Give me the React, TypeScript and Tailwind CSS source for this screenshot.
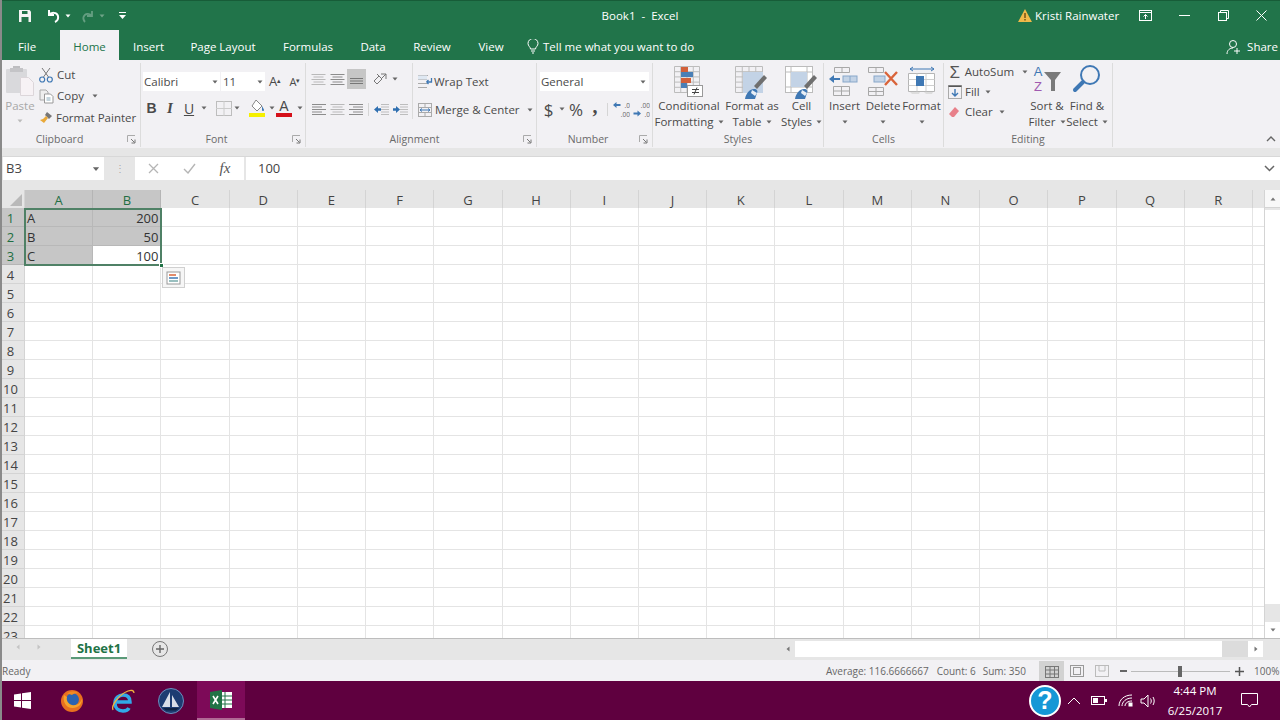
import React from "react";

const font = "font-['Open_Sans','Noto_Sans',sans-serif]";
const COLS = ["A","B","C","D","E","F","G","H","I","J","K","L","M","N","O","P","Q","R",""];

function Caret({ c = "#666", className = "" }: { c?: string; className?: string }) {
  return <svg width="6" height="4" viewBox="0 0 6 4" className={className}><path d="M0.5 0.5h5L3 3.5z" fill={c} /></svg>;
}
function Launcher() {
  return (
    <svg width="9" height="9" viewBox="0 0 9 9"><path d="M0.5 7V0.5H8" fill="none" stroke="#aaa" /><path d="M4 4l3.5 3.5M8 4.5V8H4.5" fill="none" stroke="#777" /></svg>
  );
}
function Lines({ kind, dim = false }: { kind: "l" | "c" | "r"; dim?: boolean }) {
  const rows = [14, 10, 14, 10, 14];
  return (
    <svg width="15" height="13" viewBox="0 0 15 13">
      {rows.map((w, i) => {
        const x = kind === "l" ? 1 : kind === "c" ? (15 - w) / 2 : 15 - w - 1;
        return <rect key={i} x={x} y={1 + i * 2.5} width={w} height="1" fill={dim ? "#b9b9b9" : "#8c8c8c"} />;
      })}
    </svg>
  );
}
function Indent({ dir }: { dir: "l" | "r" }) {
  return (
    <svg width="17" height="13" viewBox="0 0 17 13">
      {[1, 3.5, 6, 8.5, 11].map((y) => <rect key={y} x="8" y={y} width="8" height="1" fill="#bdbdbd" />)}
      <path d={dir === "l" ? "M1 6.5l4-3.5v2.2h3v2.6H5V10z" : "M8 6.5L4 3v2.2H1v2.6h3V10z"} fill="#2f6fb0" />
    </svg>
  );
}
function GridIcon({ w = 30, h = 30, fill = "none" }: { w?: number; h?: number; fill?: string }) {
  return (
    <g stroke="#bcbcbc" strokeWidth="1" fill={fill}>
      {Array.from({ length: 6 }).map((_, i) => <path key={i} d={`M0.5 ${0.5 + (i * (h - 1)) / 5}H${w - 0.5}`} />)}
      {Array.from({ length: 5 }).map((_, i) => <path key={i} d={`M${0.5 + (i * (w - 1)) / 4} 0.5V${h - 0.5}`} />)}
    </g>
  );
}
function Brush() {
  return (
    <g>
      <path d="M19 20l10-11 3 3-10 11z" fill="#6f6f6f" />
      <path d="M10 33c1-6 5-10 9-10 3 0 4 2 3 4l-2 6z" fill="#3f78b4" />
      <path d="M17 24l5 3-2 3-4-3z" fill="#e8eef5" />
    </g>
  );
}
function CondIcon() {
  return (
    <svg width="32" height="32" viewBox="0 0 32 32">
      <g transform="translate(1,0)"><GridIcon w={26} h={27} /></g>
      <rect x="8" y="1" width="7" height="5" fill="#d2603a" />
      <rect x="8" y="6" width="12" height="5" fill="#4a7fb6" />
      <rect x="8" y="12" width="10" height="5" fill="#d2603a" />
      <rect x="8" y="17" width="6" height="5" fill="#4a7fb6" />
      <rect x="14.5" y="19.5" width="15" height="11" fill="#fff" stroke="#999" />
      <path d="M19 23.500h7M19 26.500h7M24 21.500l-3 7" stroke="#444" fill="none" />
    </svg>
  );
}
function TableIcon() {
  return (
    <svg width="34" height="34" viewBox="0 0 34 34">
      <GridIcon w={28} h={27} />
      <rect x="8" y="6" width="20" height="21" fill="#c3d3e6" />
      <Brush />
    </svg>
  );
}
function StyleIcon() {
  return (
    <svg width="34" height="34" viewBox="0 0 34 34">
      <rect x="0.5" y="0.5" width="27" height="26" fill="#fff" stroke="#bcbcbc" />
      <path d="M6 .5v26M.5 6h27M22 .5v26M.5 21h27" stroke="#bcbcbc" />
      <rect x="6" y="6" width="16" height="15" fill="#c3d3e6" />
      <Brush />
    </svg>
  );
}
function InsertIcon() {
  return (
    <svg width="32" height="30" viewBox="0 0 32 30">
      <path d="M5.5 1.5h15v5h-15zM13 1.5v5M4.5 20.5h16v9h-16zM12.5 20.5v9M4.5 25h16" fill="none" stroke="#a8a8a8" />
      <rect x="14" y="10" width="14" height="6" fill="#c3d3e6" stroke="#88a7c9" />
      <path d="M21 10v6" stroke="#88a7c9" />
      <path d="M0 13l5-4v3h6v2H5v3z" fill="#3f78b4" />
    </svg>
  );
}
function DeleteIcon() {
  return (
    <svg width="32" height="30" viewBox="0 0 32 30">
      <path d="M1.5 1.5h15v5h-15zM9 1.5v5M1.5 21.5h15v8h-15zM9 21.5v8M1.5 25.5h15" fill="none" stroke="#a8a8a8" />
      <rect x="7" y="10" width="11" height="6" fill="#c3d3e6" stroke="#88a7c9" />
      <path d="M18 6l12 13M30 6L18 19" stroke="#d9643a" strokeWidth="2.4" />
    </svg>
  );
}
function FormatIcon() {
  return (
    <svg width="28" height="30" viewBox="0 0 28 30">
      <path d="M2 3h24M2 3l3-2M2 3l3 2M26 3l-3-2M26 3l-3 2" stroke="#3f78b4" fill="none" />
      <path d="M0.5 7.5h26v18h-26z" fill="#fff" stroke="#b5b5b5" />
      <path d="M9 7.5v18M18 7.5v18M.5 13.5h26M.5 19.5h26" stroke="#cfcfcf" />
      <rect x="8" y="10" width="8" height="10" fill="#3f78b4" />
      <path d="M2 26h10l-1 2H4zM16 26h9l-1 2h-6z" fill="#ddd" />
    </svg>
  );
}

function BigBtn({ w, icon, l1, l2, h = 32 }: { w: number; icon: React.ReactNode; l1: string; l2?: string; h?: number }) {
  return (
    <div className="flex shrink-0 flex-col items-center" style={{ width: w }}>
      <div className="flex items-start justify-center" style={{ height: h }}>{icon}</div>
      <div className="h-4 whitespace-nowrap text-[11.5px] leading-4">{l1}</div>
      <div className="flex h-4 items-center gap-1 whitespace-nowrap text-[11.5px] leading-4">
        {l2 ? <span>{l2}</span> : null}
        <Caret />
      </div>
    </div>
  );
}
function Group({ w, label, launcher, children, shift }: { w: number; label: string; launcher?: boolean; children: React.ReactNode; shift?: number }) {
  return (
    <div className="flex h-[84px] shrink-0 flex-col border-r border-[#dcdcdc]" style={{ width: w }}>
      <div className="flex h-[69px] items-start overflow-visible">{children}</div>
      <div className="flex h-[15px] items-center">
        <div className="flex-1 text-center text-[10.5px] leading-[15px] text-[#6a6a6a]" style={shift ? { paddingRight: shift } : undefined}>{label}</div>
        {launcher ? <div className="mr-[4px] flex"><Launcher /></div> : null}
      </div>
    </div>
  );
}
function Cell({ w, children, className = "" }: { w: number; children?: React.ReactNode; className?: string }) {
  return <div className={`flex shrink-0 items-center justify-center ${className}`} style={{ width: w }}>{children}</div>;
}

function Ribbon() {
  return (
    <div className="flex h-[88px] bg-[#f2f1f4] pt-[3px] text-[#4a4a4a]">
      <Group w={139} label="Clipboard" launcher shift={10}>
        <div className="flex w-[36px] flex-col items-center pt-[2px]">
          <svg width="30" height="31" viewBox="0 0 30 31" className="shrink-0">
            <rect x="1" y="4" width="21" height="24" rx="1" fill="#d9d9dc" />
            <rect x="8" y="1" width="7" height="3" fill="#bdbdc0" /><rect x="5" y="3" width="13" height="4" fill="#c4c4c7" />
            <path d="M15.5 12.5h8l5 5v13h-13z" fill="#f7f2f5" stroke="#dcd6da" />
          </svg>
          <div className="mt-[2px] text-[11.5px] leading-4 text-[#a8a8a8]">Paste</div>
          <Caret c="#bbb" className="mt-[5px]" />
        </div>
        <div className="ml-[1px] flex flex-col text-[11.5px] leading-4">
          <div className="flex h-[22px] items-center gap-[3px] pt-[2px]">
            <svg width="14" height="16" viewBox="0 0 14 16" fill="none"><path d="M3 1l6.5 9M11 1L4.500 10" stroke="#777" /><circle cx="3.200" cy="12.500" r="2.500" stroke="#3f78b4" strokeWidth="1.200" /><circle cx="10.800" cy="12.500" r="2.500" stroke="#3f78b4" strokeWidth="1.200" /></svg>
            <span className="ml-[1px]">Cut</span>
          </div>
          <div className="flex h-[22px] items-center gap-[3px]">
            <svg width="15" height="15" viewBox="0 0 15 15" fill="none"><path d="M1 1h6l2 2v8H1z" fill="#eee" stroke="#aaa" /><path d="M5.500 5h6l2.500 2.500V14H5.500z" fill="#fff" stroke="#999" /><path d="M7.500 9h4M7.500 11h4" stroke="#8ab" /></svg>
            <span>Copy</span><Caret className="ml-[5px]" />
          </div>
          <div className="flex h-[21px] items-center gap-[3px]">
            <svg width="14" height="14" viewBox="0 0 14 14"><path d="M8 1l5 4-3 3-4-4z" fill="#777" /><path d="M7 5l2 2-4 5-4-3 3-1z" fill="#e9a93a" /></svg>
            <span className="whitespace-nowrap">Format Painter</span>
          </div>
        </div>
      </Group>
      <Group w={165} label="Font" launcher>
        <div className="flex flex-col pl-[2px] pt-[9px]">
          <div className="flex h-[19px] items-center">
            <div className="flex h-[19px] w-[77px] items-center justify-between bg-white pl-[1px] pr-[2px] text-[11.5px]"><span>Calibri</span><Caret /></div>
            <div className="ml-px flex h-[19px] w-[44px] items-center justify-between bg-white pl-[2px] pr-[2px] text-[11.5px]"><span>11</span><Caret /></div>
            <div className="ml-[1px] w-[18px] text-center text-[13px] leading-none">A<sup className="text-[7px]">▴</sup></div>
            <div className="ml-[2px] w-[18px] text-center text-[11px] leading-none">A<sup className="text-[7px]">▾</sup></div>
          </div>
          <div className="mt-[7px] flex h-[20px] items-center">
            <Cell w={15} className="ml-[1px] font-['Liberation_Sans'] text-[14px] font-bold">B</Cell>
            <Cell w={22} className="font-['Liberation_Serif'] text-[15px] font-bold italic">I</Cell>
            <Cell w={16} className="text-[14px] underline">U</Cell>
            <Cell w={14}><Caret /></Cell>
            <Cell w={18} className="ml-[4px]"><svg width="16" height="15" viewBox="0 0 16 15" fill="none"><rect x="0.500" y="0.500" width="15" height="14" stroke="#bdbdbd" /><path d="M8 0v15M0 7.500h16" stroke="#ccc" /></svg></Cell>
            <Cell w={10} className="ml-[-1px]"><Caret /></Cell>
            <Cell w={30}><svg width="18" height="18" viewBox="0 0 18 18"><path d="M8 1l6 6-5 5-5-5z" fill="#fff" stroke="#888" /><path d="M14 7c1 2 2 3 2 4s-1 1-1 1-1 0-1-1z" fill="#3f78b4" /><rect x="1" y="14" width="16" height="4" fill="#f5f000" /></svg></Cell>
            <Cell w={6} className="ml-[-3px]"><Caret /></Cell>
            <Cell w={24} className="ml-[-3px]">
              <div className="flex flex-col items-center"><span className="font-['Liberation_Sans'] text-[14px] leading-[14px]">A</span><span className="h-[4px] w-[16px] bg-[#d5101a]" /></div>
            </Cell>
            <Cell w={6} className="ml-[1px]"><Caret /></Cell>
          </div>
        </div>
      </Group>
      <Group w={231} label="Alignment" launcher>
        <div className="flex w-[106px] flex-col pl-[3px] pt-[6px]">
          <div className="flex h-[20px] items-center">
            <Cell w={19}><Lines kind="c" dim /></Cell>
            <Cell w={19}><Lines kind="c" /></Cell>
            <Cell w={19} className="h-[20px] bg-[#c6c6c6]"><svg width="15" height="13" viewBox="0 0 15 13">{[5, 7.500, 10].map((y) => <rect key={y} x="1" y={y} width="13" height="1" fill="#777" />)}</svg></Cell>
            <Cell w={20} className="ml-[5px]"><svg width="18" height="16" viewBox="0 0 18 16" fill="none" stroke="#777"><path d="M2 10l5-5 3 3-5 5zM5 3l3 3M9 3h5M14 3v5M14 3L9 8" /></svg></Cell>
            <Caret className="ml-[1px]" />
          </div>
          <div className="mt-[12px] flex h-[16px] items-center">
            <Cell w={19}><Lines kind="l" /></Cell>
            <Cell w={19}><Lines kind="c" dim /></Cell>
            <Cell w={19}><Lines kind="r" /></Cell>
            <div className="mx-[2px] h-[13px] w-px bg-[#d5d5d5]" />
            <Cell w={19} className="ml-[1px]"><Indent dir="l" /></Cell>
            <Cell w={19}><Indent dir="r" /></Cell>
          </div>
        </div>
        <div className="h-[56px] w-px self-start bg-[#dcdcdc]" />
        <div className="flex flex-col whitespace-nowrap pl-[4px] pt-[9px] text-[11.5px] leading-4">
          <div className="flex h-[20px] items-center gap-[1px]">
            <svg width="16" height="16" viewBox="0 0 16 16" fill="none"><path d="M1 1.500h10M1 5.500h9M1 9.500h9M1 13.500h9" stroke="#aaa" /><rect x="1" y="1.500" width="9" height="4" fill="#dfe8f2" /><path d="M14.500 4v4h-5M9.500 8l2-2M9.500 8l2 2" stroke="#3f78b4" strokeWidth="1.300" /></svg>
            <span>Wrap Text</span>
          </div>
          <div className="mt-[8px] flex h-[20px] items-center gap-[2px]">
            <svg width="16" height="16" viewBox="0 0 16 16" fill="none"><rect x="1.500" y="1.500" width="13" height="13" stroke="#aaa" /><path d="M1.500 5.500h13M1.500 10.500h13M8 1.500v4M8 10.500v4" stroke="#aaa" /><path d="M3 8h10M3 8l2-1.500M3 8l2 1.500M13 8l-2-1.500M13 8l-2 1.500" stroke="#3f78b4" /></svg>
            <span>Merge &amp; Center</span><Caret className="ml-[5px]" />
          </div>
        </div>
      </Group>
      <Group w={116} label="Number" launcher>
        <div className="flex flex-col pl-[3px] pt-[9px]">
          <div className="flex h-[19px] w-[109px] items-center justify-between bg-white pl-[1px] pr-[3px] text-[11.5px]"><span>General</span><Caret /></div>
          <div className="mt-[7px] flex h-[22px] items-center">
            <Cell w={17} className="text-[17px] leading-none">$</Cell>
            <Cell w={10}><Caret /></Cell>
            <Cell w={18} className="text-[17px] leading-none">%</Cell>
            <Cell w={20} className="mb-[7px] font-['Liberation_Serif'] text-[20px] font-bold leading-none">,</Cell>
            <div className="mx-[2px] h-[13px] w-px bg-[#d5d5d5]" />
            <Cell w={20} className="ml-[1px]"><svg width="18" height="18" viewBox="0 0 18 18"><text x="18" y="7.500" textAnchor="end" fontSize="6.500" fill="#666" fontFamily="'Open Sans'">.0</text><text x="18" y="16.500" textAnchor="end" fontSize="6.500" fill="#666" fontFamily="'Open Sans'">.00</text><path d="M1 5l3.500-3v2h4v2h-4v2z" fill="#3f78b4" /></svg></Cell>
            <Cell w={19}><svg width="18" height="18" viewBox="0 0 18 18"><text x="18" y="7.500" textAnchor="end" fontSize="6.500" fill="#666" fontFamily="'Open Sans'">.00</text><text x="18" y="16.500" textAnchor="end" fontSize="6.500" fill="#666" fontFamily="'Open Sans'">.0</text><path d="M9 13.500l-3.500-3v2h-4v2h4v2z" fill="#3f78b4" /></svg></Cell>
          </div>
        </div>
      </Group>
      <Group w={171} label="Styles">
        <div className="flex pt-[3px]">
          <BigBtn w={72} icon={<CondIcon />} l1="Conditional" l2="Formatting" />
          <BigBtn w={54} icon={<TableIcon />} l1="Format as" l2="Table" />
          <BigBtn w={45} icon={<StyleIcon />} l1="Cell" l2="Styles" />
        </div>
      </Group>
      <Group w={120} label="Cells">
        <div className="flex pl-[1px] pt-[3px]">
          <BigBtn w={39} icon={<InsertIcon />} l1="Insert" />
          <BigBtn w={38} icon={<DeleteIcon />} l1="Delete" />
          <BigBtn w={39} icon={<FormatIcon />} l1="Format" />
        </div>
      </Group>
      <Group w={169} label="Editing">
        <div className="mt-[-1px] flex w-[84px] flex-col pl-[4px] text-[11.5px]">
          <div className="flex h-[20px] items-center gap-[3px]">
            <span className="w-[14px] text-center font-['Liberation_Sans'] text-[17px] leading-none text-[#555]">Σ</span><span>AutoSum</span><Caret className="ml-[5px]" />
          </div>
          <div className="flex h-[20px] items-center gap-[3px]">
            <svg width="14" height="14" viewBox="0 0 14 14" fill="none"><rect x="0.500" y="0.500" width="13" height="13" stroke="#aaa" /><path d="M0.500 0.500h13v1.500h-13z" fill="#555" /><path d="M7 4v7M4 8l3 3 3-3" stroke="#3f78b4" strokeWidth="1.400" /></svg>
            <span>Fill</span><Caret className="ml-[2px]" />
          </div>
          <div className="flex h-[20px] items-center gap-[5px]">
            <svg width="12" height="12" viewBox="0 0 12 12"><path d="M7 1l4 4-5 6H4L1 8z" fill="#e8808a" /></svg>
            <span>Clear</span><Caret className="ml-[1px]" />
          </div>
        </div>
        <div className="flex pt-[1px]">
          <BigBtn w={38} h={34} icon={
            <svg width="30" height="32" viewBox="0 0 30 32">
              <text x="6" y="12" textAnchor="middle" fontSize="13" fill="#3f78b4" fontFamily="'Liberation Sans'">A</text>
              <text x="6" y="27" textAnchor="middle" fontSize="13" fill="#a05ab0" fontFamily="'Liberation Sans'">Z</text>
              <path d="M12 8h17l-6 8v11h-4V16z" fill="#7a7a7a" />
            </svg>} l1="Sort &amp;" l2="Filter" />
          <BigBtn w={42} h={34} icon={
            <svg width="30" height="30" viewBox="0 0 30 30" fill="none">
              <circle cx="18" cy="11" r="9" stroke="#3f78b4" strokeWidth="2" />
              <path d="M11 18L3 26" stroke="#3f78b4" strokeWidth="4" strokeLinecap="round" />
            </svg>} l1="Find &amp;" l2="Select" />
        </div>
      </Group>
      <div className="flex flex-1 items-end justify-end pb-[6px] pr-[4px]">
        <svg width="10" height="6" viewBox="0 0 10 6" fill="none"><path d="M1 5l4-4 4 4" stroke="#666" strokeWidth="1.400" /></svg>
      </div>
    </div>
  );
}

const VALUES: Record<string, string> = { A1: "A", A2: "B", A3: "C", B1: "200", B2: "50", B3: "100" };

function Sheet() {
  const rows = Array.from({ length: 23 }, (_, i) => i + 1);
  return (
    <div className="relative flex h-[448px] bg-white">
      <div className="flex-1 overflow-hidden">
        <div className="flex h-[18px] bg-[#e6e6e6] text-[13px] leading-[20px]">
          <div className="flex w-[23px] shrink-0 items-end justify-end border-r border-[#d4d4d4] pb-[2px] pr-[2px]">
            <svg width="12" height="12" viewBox="0 0 12 12"><path d="M12 0v12H0z" fill="#b9b9b9" /></svg>
          </div>
          {COLS.map((c, i) => (
            <div key={i} className={`w-[68.22px] shrink-0 border-r text-center ${i < 2 ? "border-[#b5b5b5] bg-[#c6c6c6] text-[#1f6e43]" : "border-[#d4d4d4] text-[#444]"}`}>{c}</div>
          ))}
        </div>
        {rows.map((r) => (
          <div key={r} className="flex h-[19px] text-[13px] leading-[21px]">
            <div className={`w-[23px] shrink-0 border-b border-r pr-[5px] text-center ${r <= 3 ? "border-[#b5b5b5] bg-[#c6c6c6] text-[#1f6e43]" : "border-[#d4d4d4] bg-[#e6e6e6] text-[#444]"}`}>{r}</div>
            {COLS.map((c, i) => {
              const t = VALUES[c + r];
              const sel = r <= 3 && i < 2 && !(r === 3 && i === 1);
              return (
                <div key={i} className={`w-[68.22px] shrink-0 border-b border-r pl-[2px] pr-[2px] text-[#333] ${i === 1 ? "text-right" : "text-left"} ${sel ? "border-[#b8b8b8] bg-[#c6c6c6]" : "border-[#e4e4e4]"}`}>{t}</div>
              );
            })}
          </div>
        ))}
      </div>
      {/* selection overlay */}
      <div className="absolute left-[22px] top-[18px] h-[58px] w-[138px] border-2 border-[#4f8166]" />
      <div className="absolute left-[157px] top-[73px] h-[5px] w-[5px] border border-white bg-[#217346]" />
      <div className="absolute left-[160px] top-[77px] flex h-[21px] w-[23px] items-center justify-center border border-[#d0d0d0] bg-[#f6f6f6]">
        <svg width="15" height="14" viewBox="0 0 15 14"><rect x="1" y="1" width="13" height="12" fill="#fff" stroke="#999" /><path d="M3 4h7" stroke="#d9643a" strokeWidth="1.500" /><path d="M3 7h9" stroke="#3f78b4" strokeWidth="1.500" /><path d="M3 10h9" stroke="#7aa" strokeWidth="1.500" /></svg>
      </div>
      {/* vertical scrollbar */}
      <div className="flex w-[16px] shrink-0 flex-col border-l border-[#d4d4d4] bg-[#e6e6e6]">
        <div className="flex h-[18px] items-center justify-center border-b border-[#d4d4d4] bg-[#f8f8f8]"><Caret c="#777" className="rotate-180" /></div>
        <div className="flex-1 pt-[2px]"><div className="h-[394px] w-full bg-white" /></div>
        <div className="flex h-[16px] items-center justify-center bg-white"><Caret c="#777" /></div>
      </div>
    </div>
  );
}

export default function App() {
  return (
    <div className={`${font} flex h-[720px] w-[1280px] flex-col overflow-hidden border-l-2 border-l-[#8a8a8a] bg-white`}>
      <div className="ml-[-2px] h-[60px] shrink-0 border-t border-t-[#175c38] bg-[#21744a] text-white">
        <div className="flex h-[29px] items-center">
          <div className="flex w-[262px] items-center">
            <svg width="16" height="16" viewBox="0 0 16 16" className="ml-[17px]"><path d="M2 2h10.500L14 3.500V14H2z" fill="#f4f4f4" /><rect x="5" y="3" width="5.500" height="3" fill="#21744a" /><rect x="4.500" y="9" width="7" height="5" fill="#21744a" /></svg>
            <svg width="18" height="16" viewBox="0 0 18 16" fill="none" className="ml-[11px]"><path d="M5 2v5h5M5 7c2-3 8-3 9 1 .6 3-1 5-3 6" stroke="#fff" strokeWidth="2" /></svg>
            <Caret c="#fff" className="ml-[3px]" />
            <svg width="16" height="14" viewBox="0 0 16 14" fill="none" className="ml-[9px] opacity-30"><path d="M12 2v5H7M12 7C10 4 5 4 3.500 8 3 10 4 12 5 13" stroke="#fff" strokeWidth="1.800" /></svg>
            <Caret c="#6fa387" className="ml-[3px]" />
            <svg width="7" height="7" viewBox="0 0 7 7" className="ml-[14px]"><path d="M0 0h7v1H0zM0 3h7L3.500 7z" fill="#fff" /></svg>
          </div>
          <div className="flex-1 whitespace-pre pt-[1px] text-center text-[11.5px]">Book1  -  Excel</div>
          <div className="flex w-[262px] items-center">
            <svg width="14" height="13" viewBox="0 0 14 13"><path d="M7 0l7 13H0z" fill="#f0b94a" /><rect x="6.300" y="4" width="1.400" height="5" fill="#6b4a10" /><rect x="6.300" y="10" width="1.400" height="1.500" fill="#6b4a10" /></svg>
            <span className="ml-[3px] w-[84px] whitespace-nowrap text-[11.5px]">Kristi Rainwater</span>
            <svg width="13" height="11" viewBox="0 0 13 11" fill="none" className="ml-[20px]"><rect x="0.500" y="0.500" width="12" height="10" stroke="#fff" /><path d="M0 2.500h13" stroke="#fff" /><path d="M6.500 9V4.500M4.500 6.500l2-2 2 2" stroke="#fff" /></svg>
            <div className="ml-[27px] h-px w-[11px] bg-white" />
            <svg width="11" height="11" viewBox="0 0 11 11" fill="none" className="ml-[28px]"><rect x="0.500" y="2.500" width="8" height="8" stroke="#fff" /><path d="M2.500 2.500v-2h8v8h-2" stroke="#fff" /></svg>
            <svg width="11" height="11" viewBox="0 0 11 11" fill="none" className="ml-[27px]"><path d="M0.500 0.500l10 10M10.500 0.500l-10 10" stroke="#fff" /></svg>
          </div>
        </div>
        <div className="flex h-[30px] items-end text-[11.5px] leading-4">
          <div className="flex h-[30px] w-[60px] items-center justify-center pr-[6px] pt-[4px]">File</div>
          <div className="flex h-[30px] w-[59px] items-center justify-center bg-[#f2f1f4] pt-[4px] text-[#21744a]">Home</div>
          <div className="flex h-[30px] w-[59px] items-center justify-center pt-[4px]">Insert</div>
          <div className="flex h-[30px] w-[90px] items-center justify-center pt-[4px]">Page Layout</div>
          <div className="flex h-[30px] w-[80px] items-center justify-center pt-[4px]">Formulas</div>
          <div className="flex h-[30px] w-[50px] items-center justify-center pt-[4px]">Data</div>
          <div className="flex h-[30px] w-[68px] items-center justify-center pt-[4px]">Review</div>
          <div className="flex h-[30px] w-[50px] items-center justify-center pt-[4px]">View</div>
          <div className="flex h-[30px] flex-1 items-center gap-[4px] pl-[11px] pt-[3px]">
            <svg width="12" height="15" viewBox="0 0 12 15" fill="none"><path d="M3.500 10c0-2-2.500-3-2.500-5.500a5 5 0 0 1 10 0C11 7 8.500 8 8.500 10zM4 12h4M5 14h2" stroke="#fff" /></svg>
            <span>Tell me what you want to do</span>
          </div>
          <div className="flex h-[30px] items-center pr-[2px] pt-[4px]">
            <svg width="16" height="16" viewBox="0 0 16 16" fill="none"><circle cx="7" cy="5" r="3.500" stroke="#fff" /><path d="M1 15c0-4 3-6 6-6M11 9v6M8 12h6" stroke="#fff" /></svg>
            <span className="ml-[5px]">Share</span>
          </div>
        </div>
      </div>
      <Ribbon />
      <div className="h-[9px] shrink-0 border-b border-[#d8d8d8] bg-[#e6e6e6]" />
      <div className="flex h-[33px] shrink-0 items-start bg-[#e6e6e6] pl-[1px]">
        <div className="flex h-[23px] w-[101px] items-center justify-between bg-white pl-[3px] pr-[5px] text-[13px] text-[#444]"><span>B3</span><Caret c="#666" className="scale-125" /></div>
        <div className="flex h-[23px] w-[31px] items-center justify-center text-[10px] text-[#aaa]">⋮</div>
        <div className="flex h-[23px] w-[109px] items-center bg-white">
          <Cell w={36}><svg width="11" height="11" viewBox="0 0 11 11" fill="none"><path d="M1 1l9 9M10 1l-9 9" stroke="#b5b5b5" strokeWidth="1.300" /></svg></Cell>
          <Cell w={36}><svg width="13" height="11" viewBox="0 0 13 11" fill="none"><path d="M1 6l4 4 7-9" stroke="#b5b5b5" strokeWidth="1.400" /></svg></Cell>
          <Cell w={36} className="font-['Liberation_Serif'] text-[15px] italic text-[#555]">fx</Cell>
        </div>
        <div className="ml-[2px] flex h-[23px] flex-1 items-center justify-between bg-white pl-[12px] pr-[5px] text-[13px] text-[#444]">
          <span>100</span>
          <svg width="11" height="7" viewBox="0 0 11 7" fill="none"><path d="M1 1l4.500 4.500L10 1" stroke="#666" strokeWidth="1.500" /></svg>
        </div>
      </div>
      <Sheet />
      {/* tab bar */}
      <div className="flex h-[22px] shrink-0 items-start border-t border-[#bdbdbd] bg-[#e6e6e6]">
        <div className="flex w-[69px] items-center gap-[15px] pl-[13px] pt-[6px]">
          <Caret c="#c4c4c4" className="rotate-90" /><Caret c="#c4c4c4" className="-rotate-90" />
        </div>
        <div className="h-[20px] w-[56px] border-b-2 border-b-[#5a9a78] bg-white text-center text-[13px] font-bold leading-[18px] text-[#217346]">Sheet1</div>
        <div className="ml-[25px] mt-[2px] flex h-[16px] w-[16px] items-center justify-center rounded-full border border-[#777] text-[#666]">
          <svg width="10" height="10" viewBox="0 0 10 10"><path d="M5 1v8M1 5h8" stroke="#666" strokeWidth="1.400" /></svg>
        </div>
        <div className="flex-1" />
        <div className="flex items-center pr-[17px] pt-[2px]">
          <Cell w={15} className="h-[16px]"><Caret c="#777" className="rotate-90" /></Cell>
          <div className="h-[16px] w-[427px] bg-white" />
          <div className="h-[16px] w-[26px] bg-[#dcdcdc]" />
          <Cell w={15} className="h-[16px] bg-white"><Caret c="#777" className="-rotate-90" /></Cell>
        </div>
      </div>
      {/* status */}
      <div className="flex h-[21px] shrink-0 items-center bg-[#f2f1f4] pt-[1px] text-[10px] text-[#666]">
        <span>Ready</span>
        <div className="flex-1" />
        <span>Average: 116.6666667</span>
        <span className="ml-[8px]">Count: 6</span>
        <span className="ml-[7px]">Sum: 350</span>
        <div className="mb-[-1px] ml-[13px] flex h-[21px] w-[25px] items-center justify-center self-start bg-[#d2d2d2]">
          <svg width="14" height="12" viewBox="0 0 14 12" fill="none" stroke="#777"><rect x="0.500" y="0.500" width="13" height="11" /><path d="M5 0v12M9.500 0v12M0 4h14M0 8h14" /></svg>
        </div>
        <svg width="14" height="12" viewBox="0 0 14 12" fill="none" stroke="#999" className="ml-[6px]"><rect x="0.500" y="0.500" width="13" height="11" /><rect x="3.500" y="2.500" width="7" height="7" /></svg>
        <svg width="14" height="12" viewBox="0 0 14 12" fill="none" stroke="#bbb" className="ml-[11px]"><rect x="0.500" y="0.500" width="13" height="11" /><path d="M4 0v6h6V0" /></svg>
        <div className="ml-[11px] h-[2px] w-[7px] bg-[#666]" />
        <div className="relative ml-[4px] h-px w-[99px] bg-[#bbb]">
          <div className="absolute left-[47px] top-[-5px] h-[11px] w-[4px] bg-[#666]" />
        </div>
        <svg width="9" height="9" viewBox="0 0 9 9" className="ml-[5px]"><path d="M4.500 0v9M0 4.500h9" stroke="#555" strokeWidth="1.500" /></svg>
        <span className="ml-[10px] w-[26px] whitespace-nowrap">100%</span>
      </div>
      {/* taskbar */}
      <div className="ml-[-2px] flex h-[39px] shrink-0 items-center bg-[#5f003f] text-white">
        <svg width="17" height="17" viewBox="0 0 17 17" className="ml-[14px]"><path d="M0 2.500l7-1v6.500H0zM8 1.300L17 0v8H8zM0 9h7v6.500l-7-1zM8 9h9v8l-9-1.300z" fill="#fff" /></svg>
        <svg width="24" height="24" viewBox="0 0 24 24" className="ml-[29px]"><circle cx="12" cy="12" r="11" fill="#e8701f" /><circle cx="12.500" cy="10.500" r="6.500" fill="#2b63b0" /><path d="M4 6c-1 4 0 9 4 12 4 2 9 1 12-2 1.500-2 2-4 2-6-2 5-6 7-10 6-4-1-6-5-5-8z" fill="#f6a32c" /><path d="M7 5c3-3 8-3 11-1-3 0-5 1-6 2-2-1-3-1-5-1z" fill="#f08a24" /></svg>
        <svg width="26" height="26" viewBox="0 0 26 26" fill="none" className="ml-[26px]"><path d="M6 14h14c0-5-3-7-7-7s-8 3-8 8 3 8 8 8c3 0 5-1 6-3" stroke="#31a9e8" strokeWidth="3.500" /><path d="M3 22C1 18 8 7 18 3c3-1 6-1 6 2" stroke="#f2b43c" strokeWidth="1.300" /></svg>
        <svg width="26" height="26" viewBox="0 0 26 26" className="ml-[22px]"><circle cx="13" cy="13" r="12.500" fill="#1d3c72" /><circle cx="13" cy="13" r="12.500" fill="none" stroke="#6d8fbf" /><path d="M12 4v15H4zM14 7l7 12h-7z" fill="#d8dde8" /><path d="M5 20h16l-3 2.500H8z" fill="#0e2244" /></svg>
        <div className="ml-[13px] flex h-[39px] w-[48px] items-center justify-center border-b-2 border-b-[#b06a95] bg-[#7d0a58]">
          <svg width="22" height="20" viewBox="0 0 22 20"><rect x="9" y="2" width="13" height="16" fill="#fff" /><path d="M9 6h13M9 10h13M9 14h13M15 2v16" stroke="#217346" /><path d="M0 2l12-2v20L0 18z" fill="#217346" /><path d="M3 6l5 8M8 6l-5 8" stroke="#fff" strokeWidth="1.600" /></svg>
        </div>
        <div className="flex-1" />
        <div className="flex h-[32px] w-[32px] items-center justify-center rounded-full border-[2px] border-white bg-[#1497d6] font-['Liberation_Sans'] text-[25px] font-bold leading-none">?</div>
        <svg width="14" height="8" viewBox="0 0 14 8" fill="none" className="ml-[6px]"><path d="M1 7l6-6 6 6" stroke="#fff" /></svg>
        <svg width="16" height="9" viewBox="0 0 16 9" className="ml-[10px]"><rect x="0.500" y="0.500" width="13" height="8" fill="none" stroke="#fff" /><rect x="2" y="2" width="5" height="5" fill="#fff" /><rect x="14" y="3" width="2" height="3" fill="#fff" /></svg>
        <svg width="15" height="13" viewBox="0 0 15 13" fill="none" className="ml-[11px]" stroke="#fff"><path d="M1 12C1 6 6 1 14 1M4 12c0-4 4-8 10-8M7 12c0-3 3-5 7-5" /><rect x="11" y="9" width="3" height="3" fill="#fff" /></svg>
        <svg width="16" height="14" viewBox="0 0 16 14" fill="none" className="ml-[7px]" stroke="#fff"><path d="M1 5h3l4-4v12l-4-4H1zM10.500 4.500c1 1.500 1 3.500 0 5M13 3c1.600 2.500 1.600 5.500 0 8" /></svg>
        <div className="ml-[7px] flex w-[64px] flex-col items-center text-[11.5px] leading-[20px]">
          <span>4:44 PM</span>
          <span>6/25/2017</span>
        </div>
        <svg width="17" height="15" viewBox="0 0 17 15" fill="none" className="ml-[14px] mr-[22px]" stroke="#fff"><path d="M0.500 0.500h16v11h-6l-2 2.500-2-2.500h-6z" /></svg>
      </div>
    </div>
  );
}
